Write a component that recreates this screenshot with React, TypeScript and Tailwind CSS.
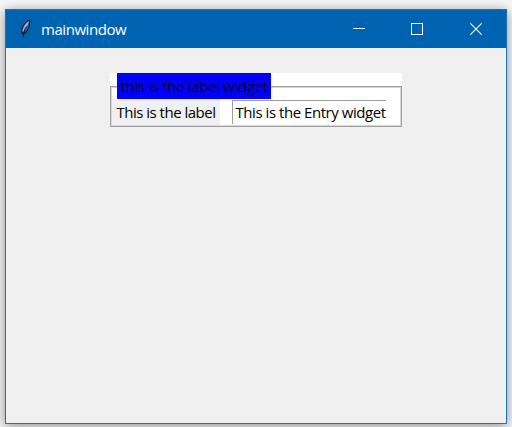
import React from "react";

function FeatherIcon() {
  return (
    <svg width="12" height="20" viewBox="0 0 12 20" className="shrink-0">
      <path d="M10.2 0.6C7 1.2 3 5 1.6 9.2C0.9 11.5 1 14 2.6 15.4C5 15.4 7.2 13.4 8.4 10.4C9.8 7 10.8 3.6 10.2 0.6Z" fill="#14202e" />
      <path d="M9.2 1.8C6.4 3.4 3.4 6.8 2.6 10.8C2.3 12 2.6 13 3 13.4C5.4 11 8.4 6 9.2 1.8Z" fill="#8fb4e0" />
      <path d="M9.2 3C8.2 7 5.8 10.6 3.8 13.8C6.2 13 9 8.6 9.2 3Z" fill="#3f74b8" />
      <path d="M6.6 7.5C4.8 10 3.4 13 3.2 18.4" stroke="#0c1219" strokeWidth="1" fill="none" />
    </svg>
  );
}

function TitleBar() {
  return (
    <header className="flex h-[38px] items-center bg-[#0063b1] pl-[14px] text-white">
      <FeatherIcon />
      <h1 className="-mt-px ml-[9px] grow text-[15px] leading-5 tracking-[-0.45px]">mainwindow</h1>
      <button className="flex h-full w-[58px] items-center justify-center" aria-label="Minimize">
        <svg width="12" height="12" shapeRendering="crispEdges"><path d="M0 5.5H12" stroke="white" /></svg>
      </button>
      <button className="flex h-full w-[58px] items-center justify-center" aria-label="Maximize">
        <svg width="12" height="12" shapeRendering="crispEdges"><rect x="0.5" y="0.5" width="11" height="11" fill="none" stroke="white" /></svg>
      </button>
      <button className="flex h-full w-[60px] items-center justify-center" aria-label="Close">
        <svg width="12" height="12"><path d="M0.4 0.4L11.6 11.6M11.6 0.4L0.4 11.6" stroke="white" strokeWidth="1.1" /></svg>
      </button>
    </header>
  );
}

function LabelFrame() {
  return (
    <section className="relative h-[54px] w-[292px] bg-white pt-[13px] text-[15px] leading-5 text-black">
      <div className="flex h-[41px] items-end border border-[#a0a0a0] pb-px pl-px shadow-[inset_0_0_0_1px_#d8d8d8]">
        <span className="flex h-[26px] w-[108px] items-center bg-[#f0f0f0] pl-[5px] whitespace-nowrap tracking-[-0.5px]">
          This is the label
        </span>
        <span className="mb-px ml-3 flex h-[24px] w-[154px] items-center border-t border-l border-[#a0a0a0] pb-0.5 pl-[3px] whitespace-nowrap tracking-[-0.45px]">
          This is the Entry widget
        </span>
      </div>
      <span className="absolute top-0 left-[7px] flex h-[26px] w-[154px] items-center bg-[#0000ff] pl-1 whitespace-nowrap tracking-[-0.33px] text-[#00002d]">
        this is the label widget
      </span>
    </section>
  );
}

export default function App() {
  return (
    <main className="h-[427px] w-[512px] overflow-hidden bg-[#f8f8f8] pt-[9px] pl-[5px] font-['Open_Sans',sans-serif]">
      <div className="h-[415px] w-[502px] border border-[#1874bd] bg-[#f0f0f0] shadow-[0_2px_12px_rgba(0,0,0,0.45)]">
        <TitleBar />
        <div className="flex justify-center pt-[25px] pr-px">
          <LabelFrame />
        </div>
      </div>
    </main>
  );
}
